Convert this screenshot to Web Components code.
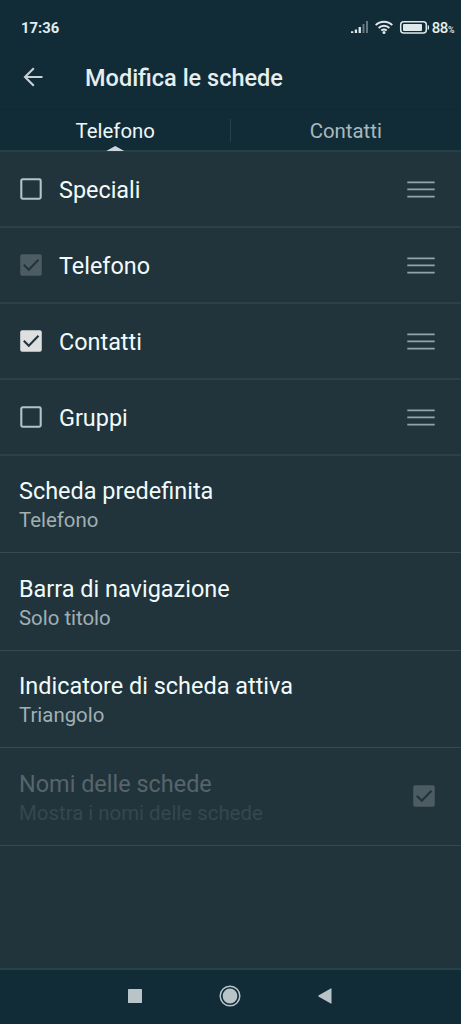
<!DOCTYPE html>
<html lang="it">
<head>
<meta charset="utf-8">
<title>Modifica le schede</title>
<style>
html,body{margin:0;height:100%;background:#21343c}
body{font-family:Roboto,"Noto Sans",sans-serif;color:#f2fbfc;overflow:hidden}
</style>
</head>
<body>
<phone-screen>
  <status-bar slot="top" time="17:36" battery="88"></status-bar>
  <app-bar slot="top">Modifica le schede</app-bar>
  <tab-strip slot="top"><tab-item active>Telefono</tab-item><tab-item>Contatti</tab-item></tab-strip>
  <tab-row>Speciali</tab-row>
  <tab-row state="locked">Telefono</tab-row>
  <tab-row state="on">Contatti</tab-row>
  <tab-row>Gruppi</tab-row>
  <pref-row>Scheda predefinita<span slot="summary">Telefono</span></pref-row>
  <pref-row>Barra di navigazione<span slot="summary">Solo titolo</span></pref-row>
  <pref-row>Indicatore di scheda attiva<span slot="summary">Triangolo</span></pref-row>
  <pref-row disabled>Nomi delle schede<span slot="summary">Mostra i nomi delle schede</span><check-box slot="widget" state="locked"></check-box></pref-row>
  <nav-bar slot="bottom"></nav-bar>
</phone-screen>
<script>
const define = (name, html, setup) => customElements.define(name, class extends HTMLElement {
  static observedAttributes = ['state'];
  constructor() {
    super();
    this.attachShadow({mode: 'open'}).innerHTML = html;
  }
  connectedCallback() { if (setup) setup(this, this.shadowRoot); }
  attributeChangedCallback() { if (setup) setup(this, this.shadowRoot); }
});

define('phone-screen', `<style>
:host{display:flex;flex-direction:column;height:1024px;width:100%;background:#21343c}
header{background:#122c37}
main{flex:1;min-height:0}
</style><header><slot name="top"></slot></header><main><slot></slot></main><slot name="bottom"></slot>`);

define('status-bar', `<style>
:host{display:flex;height:46px;padding:9px 7px 0 21px;box-sizing:border-box;align-items:center;justify-content:space-between;color:#e3edef}
.time{font-size:14.8px;font-weight:700}
.right{display:flex;align-items:center}
svg{display:block}
.pct{font-size:15px;font-weight:500;margin-left:3px;white-space:nowrap;letter-spacing:-.4px}
small{font-size:8.8px}
</style><span class="time"></span><div class="right">
<svg width="78" height="18" viewBox="0 0 78 18" fill="#dfe8ea">
<path d="M0 12.3h2.3v1.7H0zM3.8 10.5h2.3V14H3.8zM7.6 8h2.3v6H7.6z"/><path d="M11.5 5h2v9h-2zM15 2h2v12h-2z" opacity=".4"/>
<g fill="none" stroke="#dfe8ea" stroke-width="1.9"><path d="M24.7 6.1a11.8 11.8 0 0 1 16.6 0M27.6 9a7.6 7.6 0 0 1 10.8 0M30.3 11.7a3.8 3.8 0 0 1 5.4 0"/></g><circle cx="33" cy="13.4" r="1.5"/>
<rect x="49.7" y="2.7" width="25.6" height="11.4" rx="3" fill="none" stroke="#dfe8ea" stroke-width="1.5"/><rect x="52" y="4.9" width="19" height="7" rx="1"/><path d="M76.7 6.5h1.3v4h-1.3z"/>
</svg><span class="pct"></span></div>`, (el, r) => {
  r.querySelector('.time').textContent = el.getAttribute('time');
  r.querySelector('.pct').innerHTML = el.getAttribute('battery') + '<small>%</small>';
});

define('app-bar', `<style>
:host{display:flex;height:64px;box-sizing:border-box;align-items:center;padding:0 0 0 22px;border-bottom:1px solid #122831;font-size:23.5px;font-weight:500;color:#e5eef0}
svg{margin:0 41px 1px 0;flex:none}
</style><svg width="22" height="22" viewBox="0 0 22 22" fill="none" stroke="#c9d1d5" stroke-width="2.1"><path d="M20.5 11H3M11.8 2.2 3 11l8.8 8.8"/></svg><slot></slot>`);

define('tab-strip', `<style>
:host{display:flex;height:42px;box-sizing:border-box;border-bottom:2px solid #263e46}
</style><slot></slot>`);

define('tab-item', `<style>
:host{flex:1;display:flex;position:relative;box-sizing:border-box;justify-content:center;align-items:center;padding-top:2px;font-size:20.4px;color:#a9b8be}
:host([active]){color:#edf8f9}
i{display:none;position:absolute}
:host([active]) i{display:block}
.tri{left:50%;margin-left:-9px;bottom:-1px;width:18px;height:5px;background:#ccd5de;clip-path:polygon(50% 0,100% 100%,0 100%)}
.sep{right:0;top:9px;width:1px;height:23px;background:#28424c}
</style><slot></slot><i class="tri"></i><i class="sep"></i>`);

define('check-box', `<style>
:host{display:block;flex:none;width:22px;height:22px}
svg{display:block}
</style><svg width="22" height="22" viewBox="0 0 22 22"></svg>`, (el, r) => {
  const s = el.getAttribute('state');
  r.querySelector('svg').innerHTML = s
    ? `<rect x=".2" y=".2" width="21.6" height="21.6" rx="2" fill="${s === 'on' ? '#dddfe1' : '#4d5b62'}"/><path d="m3.8 10.8 5 4.9 9.7-9.9" fill="none" stroke="#21343c" stroke-width="2.1"/>`
    : '<rect x="1.3" y="1.3" width="19.4" height="19.4" rx="1.4" fill="none" stroke="#b6c2c8" stroke-width="2.1"/>';
});

define('tab-row', `<style>
:host{display:flex;align-items:center;height:76px;box-sizing:border-box;padding:0 26px 0 20px;border-bottom:2px solid #2b4049;font-size:23.4px}
.name{flex:1;margin-left:17px;padding-top:1px}
.grip{padding-top:2px}
</style><check-box></check-box><span class="name"><slot></slot></span>
<svg class="grip" width="28" height="18" viewBox="0 0 28 18" fill="#94a3a9"><path d="M.3.5h27.4v1.7H.3zM.3 7.6h27.4v1.7H.3zM.3 14.7h27.4v1.7H.3z"/></svg>`, (el, r) => {
  const s = el.getAttribute('state');
  if (s) r.querySelector('check-box').setAttribute('state', s);
});

define('pref-row', `<style>
:host{display:flex;align-items:center;height:97.4px;box-sizing:border-box;padding:0 26.5px 0 19px;border-bottom:1px solid #354a53}
.text{flex:1;padding-top:2.4px}
.title{font-size:23.45px;line-height:30px}
.summary{font-size:20.4px;line-height:28px;color:#a0afb4}
:host([disabled]) .title{color:#57656b}
:host([disabled]) .summary{color:#35474f}
</style><div class="text"><div class="title"><slot></slot></div><div class="summary"><slot name="summary"></slot></div></div><slot name="widget"></slot>`);

define('nav-bar', `<style>
:host{display:flex;height:56px;box-sizing:border-box;background:#122c37;border-top:2px solid #294249;align-items:center;justify-content:space-between;padding:0 129px 2px 128px}
svg{display:block}
</style>
<svg width="14" height="14" viewBox="0 0 14 14"><rect width="14" height="14" rx=".6" fill="#b9c4c9"/></svg>
<svg width="22" height="22" viewBox="0 0 22 22"><circle cx="11" cy="11" r="9.8" fill="none" stroke="#b9c4c9" stroke-width="1.5"/><circle cx="11" cy="11" r="7.4" fill="#b9c4c9"/></svg>
<svg width="14" height="16" viewBox="0 0 14 16"><path d="M.8 7.3 12.8.5q.7-.4.7.4v14.2q0 .8-.7.4L.8 8.7Q-.2 8 .8 7.3Z" fill="#b9c4c9"/></svg>`);
</script>
</body>
</html>
